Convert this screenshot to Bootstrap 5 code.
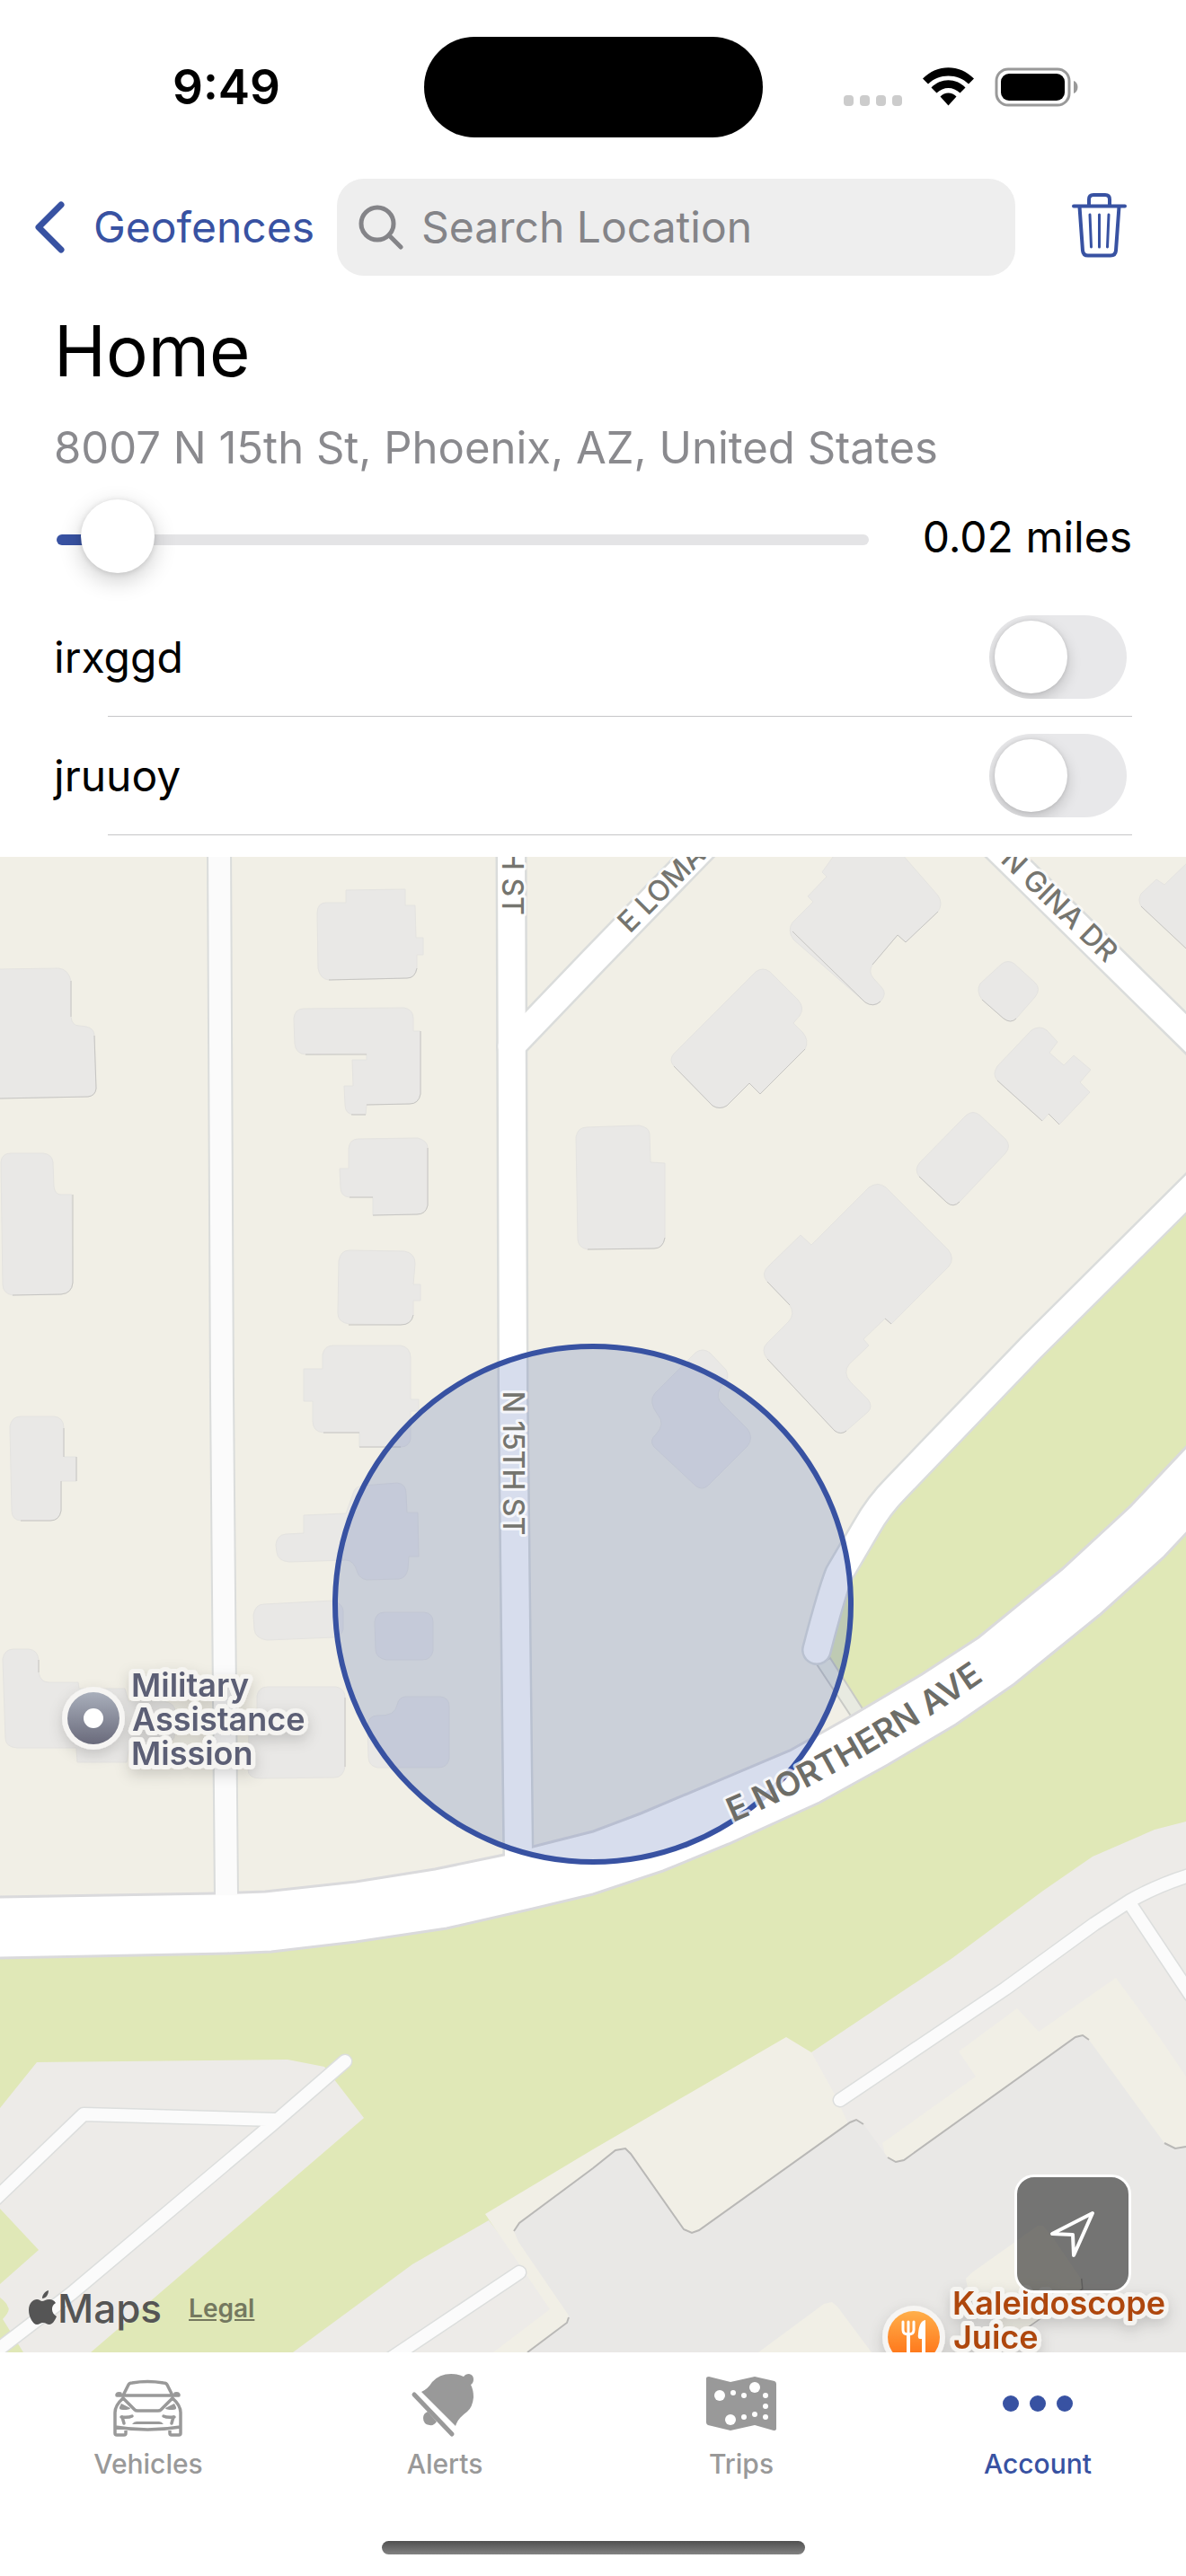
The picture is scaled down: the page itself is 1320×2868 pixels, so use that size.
<!DOCTYPE html>
<html lang="en">
<head>
<meta charset="utf-8">
<meta name="viewport" content="width=device-width, initial-scale=1">
<title>Geofence – Home</title>
<link href="https://cdn.jsdelivr.net/npm/bootstrap@5.3.0/dist/css/bootstrap.min.css" rel="stylesheet">
<style>
:root { --brand: #3852a2; --muted: #8a8a8e; --tab: #999; }
body { font-family: Inter, "Liberation Sans", sans-serif; font-size: 48px; line-height: 60px; color: #000; background: #fff; }
svg { display: block; flex: none; }
.status { padding: 41px 118px 0; }
.status > div { flex: 1 1 0; }
.clock { font-size: 53px; font-weight: 600; text-indent: 74px; }
.island { width: 377px; height: 112px; border-radius: 56px; background: #000; flex: none !important; }
.topnav { padding: 46px 66px 0 38px; }
.brand, .brand:hover { color: var(--brand); }
.back { gap: 31px; }
.trash { padding-bottom: 6px !important; }
.searchbox { height: 108px; border-radius: 30px; background: #eee; padding: 0 24px; gap: 20px; margin: 0 63px 0 25px; min-width: 0; }
.searchbox input { font-size: 48px; line-height: 60px; color: #000; min-width: 0; }
.searchbox input::placeholder { color: #848488; opacity: 1; }
.panel { padding: 36px 60px 24px; }
.title { font-size: 78px; line-height: 96px; font-weight: 400; margin: 0 0 30px; }
.address { font-size: 49px; color: var(--muted); margin: 0 0 27px; }
.radius-row { gap: 60px; margin-bottom: 24px; }
.radius { height: 82px; margin: 4px 0 0 3px; min-width: 0; }
.radius::-webkit-slider-runnable-track { height: 12px; border-radius: 6px; background: linear-gradient(90deg, var(--brand) 6%, #e4e4e6 6%); }
.radius::-webkit-slider-thumb { width: 82px; height: 82px; margin-top: -39px; border-radius: 50%; background: #fff; box-shadow: 0 8px 26px rgba(0,0,0,.2), 0 1px 6px rgba(0,0,0,.12); }
.radius-value { padding-bottom: 2px; }
.zone { height: 131px; padding-right: 6px; }
.rule { height: 1px; background: #c6c6c8; margin-left: 60px; }
.toggle { appearance: none; flex: none; width: 153px; height: 93px; margin: 0; border-radius: 47px; background: #e8e8ea; display: flex; align-items: center; padding: 6px; overflow: hidden; }
.toggle::before { content: ""; width: 81px; height: 81px; border-radius: 50%; background: #fff; box-shadow: 0 6px 16px rgba(0,0,0,.18), 0 0 4px rgba(0,0,0,.1); }
.toggle:checked { background: #34c759; justify-content: flex-end; }
.map svg.canvas { width: 100%; height: auto; }
.street { font-size: 32px; fill: #75756f; font-weight: 500; }
.street-major { font-size: 37px; fill: #6d6d67; font-weight: 600; }
.poi { font-size: 36px; font-weight: 600; stroke: #f5f4f1; stroke-width: 10px; stroke-linejoin: round; paint-order: stroke; }
.locate { right: 61px; bottom: 66px; width: 130px; height: 132px; border: 3px solid #fff; border-radius: 22px; background: rgba(0,0,0,.5); }
.credit { left: 32px; bottom: 19px; gap: 30px; color: #555; }
.credit .maps { font-size: 44px; font-weight: 500; }
.credit .legal { font-size: 28px; font-weight: 600; color: #74785f; }
.tabs { padding-top: 24px; }
.tabs a { color: var(--tab); font-size: 30px; line-height: 36px; font-weight: 500; gap: 10px; }
.tabs a.current { color: var(--brand); }
.homebar { width: 471px; height: 15px; border-radius: 8px; margin: 68px auto 24px; background: linear-gradient(#505050, #828282); }
</style>
<script src="https://cdn.jsdelivr.net/npm/bootstrap@5.3.0/dist/js/bootstrap.bundle.min.js"></script>
</head>
<body>
<header>
  <div class="status d-flex align-items-center">
    <div class="clock">9:49</div>
    <div class="island"></div>
    <div class="d-flex justify-content-end">
      <svg width="264" height="46" viewBox="0 0 264 46" role="img" aria-label="Wi-Fi and battery">
        <g fill="#ccc"><rect x="1" y="32" width="11" height="12" rx="4"/><rect x="19" y="32" width="11" height="12" rx="4"/><rect x="37" y="32" width="11" height="12" rx="4"/><rect x="55" y="32" width="11" height="12" rx="4"/></g>
        <path d="M89 13.500C105-3 130-3 146 13.500L140 19.500C128 7.500 107 7.500 95 19.500ZM98.500 23.500C109 12.500 126 12.500 136.500 23.500L130.500 29.500C123 22 112 22 104.500 29.500ZM108.500 33.500C113.500 28 121.500 28 126.500 33.500L117.500 43.500Z" fill="#000"/>
        <rect x="171" y="3" width="81" height="40" rx="13" fill="none" stroke="#999" stroke-width="3"/>
        <rect x="176" y="8" width="71" height="30" rx="9"/>
        <path d="M257 16C263 18 263 28 257 30Z" fill="#999"/>
      </svg>
    </div>
  </div>
  <nav class="topnav d-flex align-items-center">
    <a href="#" class="brand back d-flex align-items-center text-decoration-none">
      <svg width="35" height="60" viewBox="0 0 35 60" fill="none" stroke="currentColor" stroke-width="7" stroke-linecap="round" stroke-linejoin="round"><path d="M30 5L5 30L30 55"/></svg>
      <span>Geofences</span>
    </a>
    <div class="searchbox d-flex align-items-center flex-grow-1">
      <svg width="50" height="50" viewBox="0 0 50 50" fill="none" stroke="#848488" stroke-width="5" stroke-linecap="round"><circle cx="21" cy="21" r="18"/><path d="M34 34L47 47"/></svg>
      <input type="search" class="form-control border-0 bg-transparent shadow-none p-0" placeholder="Search Location" aria-label="Search Location">
    </div>
    <button type="button" class="brand trash btn border-0 p-0" aria-label="Delete geofence">
      <svg width="61" height="73" viewBox="0 0 61 73" fill="none" stroke="currentColor" stroke-width="4" stroke-linecap="round" stroke-linejoin="round"><path d="M2 15.500H59M19 15V8Q19 3 24 3H37Q42 3 42 8V15M8.500 16L12 65Q12.500 70.500 18 70.500H43Q48.500 70.500 49 65L52.500 16"/><path stroke-width="3" d="M20 25L21.500 61M30.500 25V61M41 25L39.500 61"/></svg>
    </button>
  </nav>
</header>

<main>
  <section class="panel">
    <h1 class="title">Home</h1>
    <p class="address">8007 N 15th St, Phoenix, AZ, United States</p>
    <div class="radius-row d-flex align-items-center">
      <input type="range" class="radius form-range flex-grow-1 p-0" id="radius" min="0" max="1000" value="33" aria-label="Radius">
      <label for="radius" class="radius-value text-nowrap">0.02 miles</label>
    </div>
    <div class="zone d-flex align-items-center justify-content-between">
      <label for="z1">irxggd</label><input class="toggle" type="checkbox" role="switch" id="z1">
    </div>
    <div class="rule"></div>
    <div class="zone d-flex align-items-center justify-content-between">
      <label for="z2">jruuoy</label><input class="toggle" type="checkbox" role="switch" id="z2">
    </div>
    <div class="rule"></div>
  </section>

  <section class="map position-relative overflow-hidden">
    <svg class="canvas" viewBox="0 954 1320 1665" role="img" aria-label="Map of the geofence">
      <defs>
        <linearGradient id="slate" x1="0" y1="0" x2="0" y2="1"><stop offset="0" stop-color="#a9afbb"/><stop offset="1" stop-color="#696a7b"/></linearGradient>
        <linearGradient id="orange" x1="0" y1="0" x2="0" y2="1"><stop offset="0" stop-color="#ffaf4a"/><stop offset="1" stop-color="#ff6c12"/></linearGradient>
        <filter id="soft" x="-20%" y="-20%" width="140%" height="150%"><feDropShadow dx="0" dy="6" stdDeviation="8" flood-color="#000" flood-opacity=".16"/></filter>
        <path id="northern" d="M816 2029Q960 1968 1130 1846"/>
      </defs>
      <rect y="954" width="1320" height="1665" fill="#f1efe6"/>

      <!-- parkland -->
      <g fill="#e0e8b7">
        <path d="M1320 1329L1148 1500L998 1656L973 1687L934 1752L917 1850L955 1910L1100 1850L1320 1660Z"/>
        <path d="M0 2150L300 2150L660 2080L1000 1940L1320 1680V2619H0Z"/>
      </g>

      <!-- parking lots -->
      <g fill="#edebe8">
        <path d="M41 2296L320 2293L361 2301L405 2358L101 2619H26L3 2582Q12 2572 9 2569Q8 2564 0 2558V2543L43 2505L0 2459V2347Z"/>
        <path d="M1320 2028L1285 2037L1216 2067L1161 2105L1060 2180L903 2285L875 2400L1320 2500Z"/>
        <path d="M544 2472L459 2521L326 2619H560L620 2571Z"/>
      </g>
      <path d="M875 2268L903 2285L928 2330L943 2362L953 2420L700 2560L633 2619H549L612 2571L540 2465L660 2393Z" fill="#f1efe6"/>
      <path d="M982 2386L1086 2312L1067 2284L1132 2236L1156 2262L1242 2202L1291 2269L1320 2312V2420H990Z" fill="#f1efe6"/>

      <!-- shopping centre -->
      <path fill="#e9e8e6" d="M587 2619L631 2586L633 2578L577 2496L572 2484L578 2475L660 2414L685 2394L696 2392L702 2398L761 2482L770 2486L778 2483L946 2363L953 2360L961 2365L988 2402L997 2407L1006 2405L1197 2268L1205 2266L1212 2271L1296 2386L1308 2392L1320 2390V2619Z"/>
      <g fill="none" stroke="#b9b8b6" stroke-width="2">
        <path d="M587 2619L631 2586L633 2580M572 2484L578 2475L660 2414L685 2394L696 2392L702 2398L761 2482L770 2486L778 2483L946 2363L953 2360L961 2365M988 2402L997 2407L1006 2405L1197 2268L1205 2266L1212 2271M1296 2386L1308 2392L1320 2390"/>
        <path d="M1203 2537L1204 2548L1136 2596" stroke-width="3"/>
      </g>
      <g fill="#f1efe6">
        <path d="M1155 2478H1161L1171 2490L1203 2537L1204 2548L1136 2596L1119 2594L1077 2548L1075 2537L1082 2530Z"/>
        <path d="M844 2619L917 2565L926 2563L932 2568L970 2619Z"/>
      </g>

      <!-- service lanes -->
      <g fill="none" stroke-linecap="round" stroke-linejoin="round">
        <g stroke="#dcdedd" stroke-width="17"><path id="l1" d="M384 2295L302 2366L80 2553L-10 2622M306 2360L93 2354L-8 2451"/><path id="l2" d="M578 2530L436 2625"/><path id="l3" d="M1330 2086Q1292 2097 1258 2116L1218 2142L1119 2214L935 2338M1258 2120L1325 2221"/></g>
        <path stroke="#fbfbfb" stroke-width="14" d="M384 2295L302 2366L80 2553L-10 2622M306 2360L93 2354L-8 2451M578 2530L436 2625M1330 2086Q1292 2097 1258 2116L1218 2142L1119 2214L935 2338M1258 2120L1325 2221"/>
      </g>

      <!-- houses -->
      <path id="houses" fill="#e9e8e6" stroke="#e4e3e0" stroke-width="1" d="M-2 1079L65 1078Q76 1079 79 1092V1132Q80 1142 88 1142L96 1143Q105 1145 105 1153L107 1212Q106 1220 98 1221L-2 1223Z
        M1 1294Q2 1284 12 1284H48Q58 1285 59 1294L60 1321Q61 1330 68 1330H80L81 1428Q80 1440 68 1441L14 1442Q3 1440 3 1430Z
        M353 1017Q353 1005 363 1005H385V991L451 990V1008H462L463 1044H471V1063H464V1078Q462 1089 453 1089L366 1091Q356 1090 354 1078Z
        M327 1134Q328 1123 338 1123L450 1122Q460 1124 460 1134V1148H468V1218Q466 1229 456 1229L408 1230L407 1241H395Q384 1241 384 1230L383 1209H393L392 1180H408V1173L340 1174Q329 1173 328 1162Z
        M388 1279Q389 1268 399 1268L465 1267Q476 1270 476 1278V1342Q474 1352 464 1352L415 1353V1333H389Q379 1332 379 1322L378 1301H388Z
        M377 1404Q379 1392 389 1392L450 1393Q462 1395 462 1407L460 1430H468V1448H460V1464Q458 1475 446 1475L388 1474Q376 1472 376 1462Z
        M359 1508Q361 1498 371 1498H446Q457 1500 457 1512V1558H466V1571H457V1602Q455 1611 446 1611H400V1595H360Q348 1594 348 1582V1560H338V1524H359Z
        M11 1588Q13 1577 23 1577H60Q71 1578 71 1590V1622H85V1649H68V1682Q66 1693 56 1693H23Q13 1692 13 1682Z
        M307 1720Q308 1709 318 1708L338 1707V1687L385 1685L394 1660Q396 1655 404 1654L442 1651Q452 1652 452 1663L453 1684H465L466 1733H455L454 1747Q452 1757 444 1758L408 1759Q400 1757 398 1751Q394 1737 385 1737L322 1739Q309 1738 308 1728Z
        M282 1798Q284 1786 294 1786L371 1782Q382 1786 382 1794V1814Q380 1822 371 1823L297 1826Q284 1824 283 1814Z
        M417 1806Q418 1795 428 1795H472Q482 1796 482 1806V1838Q480 1848 470 1848H430Q418 1846 418 1836Z
        M442 1898Q444 1889 452 1889H490Q500 1890 500 1900V1958Q498 1968 488 1968H420Q410 1966 410 1956L409 1922Q410 1910 420 1910Q440 1911 442 1898Z
        M286 1888Q288 1878 298 1878H374Q384 1880 384 1890V1967Q382 1979 372 1979L290 1980Q276 1980 276 1970L277 1930H286Z
        M3 1847Q5 1836 15 1836H32Q42 1837 43 1848V1862Q45 1873 54 1873H87L88 1880H139L143 1894H182Q195 1896 195 1906V1930Q193 1941 183 1942L143 1949L141 1962H86L85 1946H19Q6 1945 6 1935Z
        M641 1266Q643 1255 653 1255L711 1253Q723 1255 723 1263L724 1294L740 1295V1378Q738 1390 728 1390L654 1391Q643 1389 643 1379Z
        M750 1173L841 1082Q849 1076 857 1082L888 1113Q896 1122 890 1131L883 1139L893 1149Q901 1158 896 1168L846 1218L834 1206L809 1231Q801 1236 793 1231L750 1187Q744 1180 750 1173Z
        M930 950L915 971L920 976L899 998L905 1004L882 1027Q876 1036 883 1046L963 1116Q972 1122 980 1115Q988 1106 981 1099L972 1089Q966 1082 971 1074L999 1041L1008 1049L1044 1015Q1050 1006 1044 997L1003 950Z
        M1091 1095L1115 1073Q1122 1068 1129 1073L1152 1094Q1159 1101 1152 1110L1131 1134Q1125 1140 1117 1134L1093 1113Q1086 1103 1091 1095Z
        M1110 1187L1148 1147Q1157 1141 1165 1147L1177 1160L1168 1172L1184 1186L1195 1175L1214 1191L1202 1205L1213 1216L1179 1252L1167 1240L1160 1248L1110 1203Q1104 1196 1110 1187Z
        M1024 1294L1075 1242Q1083 1235 1091 1242L1119 1268Q1126 1276 1119 1284L1068 1338Q1061 1345 1054 1339L1023 1310Q1017 1302 1024 1294Z
        M856 1409L891 1375L903 1386L967 1322Q977 1315 986 1322L1055 1391Q1063 1401 1056 1410L992 1474L985 1468L961 1491L967 1498L945 1519Q938 1528 946 1538L966 1558Q972 1566 966 1572L942 1593Q936 1598 929 1593L854 1513Q846 1503 854 1495L878 1471Q885 1463 879 1453L854 1427Q846 1418 856 1409Z
        M729 1551L774 1506Q782 1500 790 1506L808 1525Q813 1534 805 1541Q796 1551 801 1560L832 1591Q839 1601 832 1610L788 1654Q781 1660 774 1654L728 1611Q722 1604 730 1597Q741 1585 732 1575Q721 1560 729 1551Z
        M1270 995L1287 979L1296 985L1324 958V1059L1270 1009Q1266 1002 1270 995Z"/>

      <!-- shaded lower edges of the houses -->
      <path fill="none" stroke="#c6c5c2" stroke-width="1" d="M79 1092V1132M105 1153L107 1212Q106 1220 98 1221L0 1223M81 1330V1428Q80 1440 68 1441L14 1442M464 1078Q462 1089 453 1089L366 1091M468 1148V1218Q466 1229 456 1229L408 1230M407 1241H391M408 1174H340M476 1278V1342Q474 1352 464 1352L415 1353M415 1333H389M460 1464Q458 1475 446 1475H388M400 1595H360M446 1611H400M71 1590V1622M85 1622V1649M68 1649V1682Q66 1693 56 1693H23M384 1890V1967M43 1848V1862M740 1378Q738 1390 728 1390L654 1391M896 1168L846 1218L834 1206L809 1231Q801 1236 793 1231L750 1187M882 1037L963 1116Q972 1122 980 1115M971 1074L999 1041L1008 1049L1044 1015M1093 1113L1117 1134Q1125 1140 1131 1134M1110 1203L1160 1248M1167 1240L1179 1252M1023 1310L1054 1339Q1061 1345 1068 1338M854 1427L879 1453M854 1513L929 1593Q936 1598 942 1593M985 1468L992 1474M1270 1009L1320 1056"/>

      <!-- footpath between the cul-de-sac and the avenue -->
      <path d="M909 1853L948 1912L961 1904L924 1846Z" fill="#e8eae1" stroke="#c9cac6" stroke-width="2"/>

      <!-- streets -->
      <g fill="none" stroke="#dadcdb" stroke-linecap="round" stroke-linejoin="round">
        <path stroke-width="28" d="M244 940L247 1550L252 2120"/>
        <path stroke-width="35" d="M569 940L571 1550L577 2075"/>
        <path stroke-width="34" d="M569 1165L660 1070L790 936"/>
        <path stroke-width="35" d="M1106 940L1340 1170"/>
        <path stroke-width="34" d="M1340 1309L1148 1500L998 1656Q978 1676 964 1701L934 1752Q925 1775 909 1837"/>
      </g>
      <path id="avenue" fill="#fff" stroke="#dadadc" stroke-width="3" d="M-5 2112L239 2108L295 2106L396 2095L484 2081L561 2065L593 2056L660 2039L713 2019L879 1949L950 1909L1026 1864L1089 1823L1182 1747L1258 1677L1325 1606V1702L1296 1733L1224 1798L1129 1875L1064 1920L988 1965L912 2007L811 2053L738 2083L660 2109L589 2126L497 2147L396 2162L302 2173L252 2175L-5 2180Z"/>
      <g fill="none" stroke="#fff" stroke-linecap="round" stroke-linejoin="round">
        <path stroke="#fbfbfb" stroke-width="24" stroke-linecap="butt" d="M244 940L247 1550L252 2110"/>
        <path stroke-width="30" d="M569 940L571 1550L577 2068"/>
        <path stroke-width="29" d="M569 1165L660 1070L790 936"/>
        <path stroke-width="30" d="M1106 940L1340 1170"/>
        <path stroke-width="29" d="M1340 1309L1148 1500L998 1656Q978 1676 964 1701L934 1752Q925 1775 909 1837"/>
      </g>

      <!-- geofence -->
      <circle cx="660" cy="1786" r="287" fill="#3953a4" fill-opacity=".2" stroke="#3852a2" stroke-width="6"/>

      <!-- street names -->
      <g class="street" stroke="#fff" stroke-opacity=".75" stroke-width="6" stroke-linejoin="round" paint-order="stroke">
        <text transform="translate(559 1019) rotate(90)" text-anchor="end">N 15TH ST</text>
        <text transform="translate(560 1629) rotate(90)" text-anchor="middle">N 15TH ST</text>
        <text transform="translate(701 1040) rotate(-45)">E LOMA</text>
        <text transform="translate(1231 1073) rotate(44)" text-anchor="end">N GINA DR</text>
      </g>
      <text class="street-major" stroke="#fff" stroke-opacity=".75" stroke-width="6" stroke-linejoin="round" paint-order="stroke"><textPath href="#northern">E NORTHERN AVE</textPath></text>

      <!-- places -->
      <g filter="url(#soft)">
        <circle cx="104" cy="1913" r="35" fill="#f6f5f3"/>
        <circle cx="104" cy="1913" r="29" fill="url(#slate)"/>
        <circle cx="104" cy="1913" r="11" fill="#fff"/>
        <text class="poi" fill="#5b5f75"><tspan x="146" y="1889">Military</tspan><tspan x="147" y="1927">Assistance</tspan><tspan x="146" y="1965">Mission</tspan></text>
      </g>
      <g filter="url(#soft)">
        <circle cx="1017" cy="2602" r="35" fill="#f6f5f3"/>
        <circle cx="1017" cy="2602" r="29" fill="url(#orange)"/>
        <g fill="none" stroke="#fff" stroke-linecap="round"><path stroke-width="3" d="M1005 2585V2594Q1005 2599 1011 2599Q1017 2599 1017 2594V2585M1011 2585V2597"/><path stroke-width="4" d="M1011 2599V2620M1028 2602V2620"/></g>
        <path d="M1030 2583V2604H1024Q1021 2604 1022 2598Q1023 2584 1030 2583Z" fill="#fff"/>
        <text class="poi" fill="#ae470f"><tspan x="1060" y="2577">Kaleidoscope</tspan><tspan x="1061" y="2615">Juice</tspan></text>
      </g>
    </svg>
    <button type="button" class="locate position-absolute d-flex align-items-center justify-content-center p-0" aria-label="Show my location">
      <svg width="54" height="54" viewBox="0 0 54 54" fill="none" stroke="#fff" stroke-width="4" stroke-linejoin="round"><path d="M49 4L4 27L27 28L28 51Z"/></svg>
    </button>
    <div class="credit position-absolute d-flex align-items-center">
      <span class="d-flex align-items-center maps">
        <svg width="32" height="40" viewBox="0 0 32 40" fill="#555"><path d="M22 0C22 5 19 9 15 9C15 5 18 1 22 0ZM15 12C17 12 19 10 23 10C26 10 28 11 30 14C24 17 25 26 31 29C29 34 26 38 23 38C20 38 19 36 16 36C13 36 12 38 9 38C5 38 0 30 0 22C0 14 5 10 9 10C12 10 13 12 15 12Z"/></svg>
        <span>Maps</span>
      </span>
      <a href="#" class="legal">Legal</a>
    </div>
  </section>
</main>

<footer>
  <nav class="tabs row g-0 text-center">
    <a href="#" class="col d-flex flex-column align-items-center text-decoration-none">
      <svg width="96" height="72" viewBox="0 0 96 72" fill="none" stroke="currentColor" stroke-width="3.500" stroke-linejoin="round" stroke-linecap="round">
        <path d="M20 24L26 12Q27 10 30 10Q47 7 65 10Q68 10 69 12L75 24M13 24H82M13 23Q14 21 17 22M82 23Q81 21 78 22M20 27Q11 35 11 43V66Q11 68 13 68H21Q23 68 23 66V61M75 27Q84 35 84 43V66Q84 68 82 68H74Q72 68 72 66V61M11 59Q47 65 84 59M20 27L33 40Q34 41 36 41H59Q61 41 62 40L75 27"/>
        <path stroke="none" fill="currentColor" d="M18 33L28 38Q28 40 20 40Q15 40 16 37ZM77 33L67 38Q67 40 75 40Q80 40 79 37ZM30 56Q32 53 35 53H60Q63 53 65 56Z"/>
        <path d="M18 48Q26 49 30 47M19 48L21 55M77 48Q69 49 65 47M76 48L74 55"/>
      </svg>Vehicles</a>
    <a href="#" class="col d-flex flex-column align-items-center text-decoration-none">
      <svg width="96" height="72" viewBox="0 0 96 72" fill="currentColor"><path d="M22 20Q29 17 34 9Q42 0 55 0Q63 0 69 3Q71 0 75 0Q80 1 80 6Q80 10 77 12Q80 18 80 26Q79 37 73 42Q62 50 60 58Z"/><path d="M14 23L56 67" stroke="currentColor" stroke-width="5" stroke-linecap="round"/><path d="M29 42L39 53Q36 58 31 57Q24 56 24 49Q24 44 29 42Z"/></svg>Alerts</a>
    <a href="#" class="col d-flex flex-column align-items-center text-decoration-none">
      <svg width="96" height="72" viewBox="0 0 96 72"><path fill="currentColor" d="M12 3L36 9L63 3L85 8Q87 9 87 11V61Q87 63 84 63L63 57L36 63L11 57Q9 56 9 54V5Q9 3 12 3Z"/><g fill="#fff"><circle cx="24" cy="24" r="6"/><circle cx="63" cy="15" r="6"/><circle cx="36" cy="51" r="6"/><circle cx="39" cy="21" r="3"/><circle cx="51" cy="24" r="3"/><circle cx="75" cy="24" r="3"/><circle cx="75" cy="36" r="3"/><circle cx="75" cy="48" r="3"/><circle cx="63" cy="45" r="3"/><circle cx="51" cy="48" r="3"/></g></svg>Trips</a>
    <a href="#" class="current col d-flex flex-column align-items-center text-decoration-none" aria-current="page">
      <svg width="96" height="72" viewBox="0 0 96 72" fill="currentColor"><circle cx="18" cy="33" r="9"/><circle cx="48" cy="33" r="9"/><circle cx="78" cy="33" r="9"/></svg>Account</a>
  </nav>
  <div class="homebar"></div>
</footer>
</body>
</html>
